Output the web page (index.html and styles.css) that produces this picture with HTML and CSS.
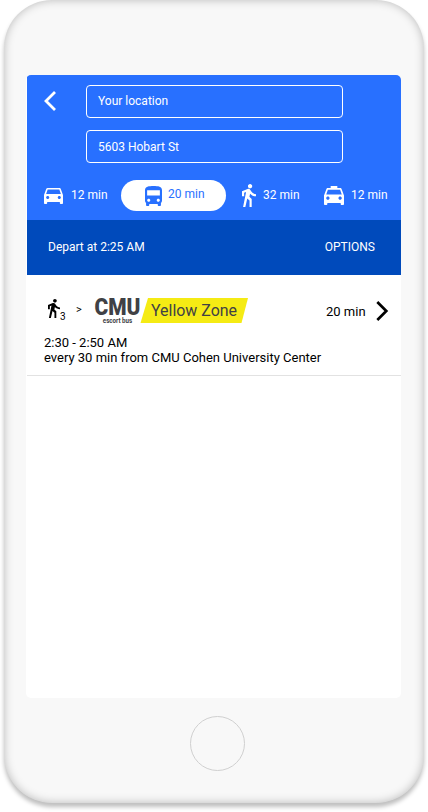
FILE: index.html
```html
<!DOCTYPE html>
<html lang="en">
<head>
<meta charset="utf-8">
<title>Directions</title>
<link rel="stylesheet" href="styles.css">
</head>
<body>
<div class="phone">
  <main class="screen">
    <header class="search">
      <svg class="back" viewBox="0 0 12 20" fill="none" stroke="#fff" stroke-width="2.8"><path d="M11 1 2 10l9 9"/></svg>
      <div class="fields">
        <div class="field">Your location</div>
        <div class="field address">5603 Hobart St</div>
      </div>
    </header>
    <nav class="modes">
      <div class="mode car">
        <svg width="19" height="16" viewBox="3 5 18 16" preserveAspectRatio="none"><path d="M18.92 6.01C18.72 5.42 18.16 5 17.5 5h-11c-.66 0-1.21.42-1.42 1.01L3 12v8c0 .55.45 1 1 1h1c.55 0 1-.45 1-1v-1h12v1c0 .55.45 1 1 1h1c.55 0 1-.45 1-1v-8l-2.08-5.99zM6.5 16c-.83 0-1.5-.67-1.5-1.5S5.67 13 6.5 13s1.5.67 1.5 1.5S7.33 16 6.5 16zm11 0c-.83 0-1.5-.67-1.5-1.5s.67-1.5 1.5-1.5 1.5.67 1.5 1.5-.67 1.5-1.5 1.5zM5 11l1.5-4.5h11L19 11H5z"/></svg>
        <span>12 min</span>
      </div>
      <div class="mode bus">
        <svg width="17" height="20" viewBox="4 2 16 19" preserveAspectRatio="none"><path d="M4 16c0 .88.39 1.67 1 2.22V20c0 .55.45 1 1 1h1c.55 0 1-.45 1-1v-1h8v1c0 .55.45 1 1 1h1c.55 0 1-.45 1-1v-1.78c.61-.55 1-1.34 1-2.22V6c0-3.5-3.58-4-8-4s-8 .5-8 4v10zm3.5 1c-.83 0-1.5-.67-1.5-1.5S6.67 14 7.5 14s1.5.67 1.5 1.5S8.33 17 7.5 17zm9 0c-.83 0-1.5-.67-1.5-1.5s.67-1.5 1.5-1.5 1.5.67 1.5 1.5-.67 1.5-1.5 1.5zm1.5-6H6V6h12v5z"/></svg>
        <span>20 min</span>
      </div>
      <div class="mode walk">
        <svg width="14" height="23" viewBox="6 1.5 13 21.5" preserveAspectRatio="none"><path d="M13.5 5.5c1.1 0 2-.9 2-2s-.9-2-2-2-2 .9-2 2 .9 2 2 2zM9.8 8.9 7 23h2.1l1.8-8 2.1 2v6h2v-7.5l-2.1-2 .6-3C14.8 12 16.8 13 19 13v-2c-1.9 0-3.5-1-4.3-2.4l-1-1.6c-.4-.6-1-1-1.7-1-.3 0-.5.1-.8.1L6 8.3V13h2V9.6l1.8-.7"/></svg>
        <span>32 min</span>
      </div>
      <div class="mode taxi">
        <svg width="20" height="19" viewBox="3 3 18 18" preserveAspectRatio="none"><path d="M18.92 6.01C18.72 5.42 18.16 5 17.5 5H15V3H9v2H6.5c-.66 0-1.21.42-1.42 1.01L3 12v8c0 .55.45 1 1 1h1c.55 0 1-.45 1-1v-1h12v1c0 .55.45 1 1 1h1c.55 0 1-.45 1-1v-8l-2.08-5.99zM6.5 16c-.83 0-1.5-.67-1.5-1.5S5.67 13 6.5 13s1.5.67 1.5 1.5S7.33 16 6.5 16zm11 0c-.83 0-1.5-.67-1.5-1.5s.67-1.5 1.5-1.5 1.5.67 1.5 1.5-.67 1.5-1.5 1.5zM5 11l1.5-4.5h11L19 11H5z"/></svg>
        <span>12 min</span>
      </div>
    </nav>
    <div class="depart"><span>Depart at 2:25 AM</span><span>OPTIONS</span></div>
    <section class="route">
      <div class="route-line">
        <svg class="step" width="12" height="19" viewBox="6 1.5 13 21.5" preserveAspectRatio="none"><path d="M13.5 5.5c1.1 0 2-.9 2-2s-.9-2-2-2-2 .9-2 2 .9 2 2 2zM9.8 8.9 7 23h2.1l1.8-8 2.1 2v6h2v-7.5l-2.1-2 .6-3C14.8 12 16.8 13 19 13v-2c-1.9 0-3.5-1-4.3-2.4l-1-1.6c-.4-.6-1-1-1.7-1-.3 0-.5.1-.8.1L6 8.3V13h2V9.6l1.8-.7"/></svg>
        <span class="minutes">3</span>
        <span class="then">&gt;</span>
        <svg class="logo" width="154" height="28" viewBox="0 0 154 28">
          <text class="cmu" x="0.5" y="17.8" textLength="46" lengthAdjust="spacingAndGlyphs">CMU</text>
          <text class="escort" x="8.8" y="25.6" textLength="29.4" lengthAdjust="spacingAndGlyphs">escort bus</text>
          <path d="M54 1h100l-6.5 25h-101z" fill="#f5eb14"/>
          <text class="zone" x="57" y="18.6" textLength="86" lengthAdjust="spacingAndGlyphs">Yellow Zone</text>
        </svg>
        <span class="duration">20 min</span>
        <svg class="next" width="13" height="20" viewBox="0 0 13 20" fill="none" stroke="#000" stroke-width="2.7"><path d="m1.3 1 9 9-9 9"/></svg>
      </div>
      <p>2:30 - 2:50 AM<br>every 30 min from CMU Cohen University Center</p>
    </section>
  </main>
  <div class="home"></div>
</div>
</body>
</html>
```

FILE: styles.css
```css
* { box-sizing: border-box; }
body { margin: 0; height: 812px; background: #fff; font-family: Roboto, sans-serif; font-size: 12px; overflow: hidden; }
svg { display: block; flex: none; fill: currentColor; overflow: visible; }

.phone {
  width: 420px;
  height: 803px;
  margin: 0 4px;
  padding-top: 75px;
  border-radius: 48px;
  background: #f8f8f8;
  box-shadow: 0 4px 4px rgba(0, 0, 0, .25), inset 0 0 10px rgba(0, 0, 0, .25);
}
.screen {
  width: 375px;
  height: 623px;
  margin-left: 22px;
  padding-left: 1px;
  border-radius: 5px;
  background: #fff;
  overflow: hidden;
}

.search { display: flex; height: 105px; padding: 10px 0 0 17px; background: #2870ff; }
.back { width: 12px; height: 20px; margin: 6px 30px 0 0; fill: none; }
.fields { display: flex; flex-direction: column; gap: 12px; }
.field {
  width: 257px;
  height: 33px;
  padding-left: 11px;
  border: 1px solid #fff;
  border-radius: 4px;
  color: #fff;
  line-height: 31px;
}
.address { line-height: 33px; }

.modes { display: flex; height: 40px; background: #2870ff; color: #fff; }
.mode { display: flex; align-items: center; height: 31px; white-space: nowrap; }
.mode span { padding-bottom: 1px; }
.car { width: 77px; margin-left: 17px; gap: 8px; }
.bus { width: 105px; padding-left: 24px; gap: 6px; border-radius: 16px; background: #fff; color: #2870ff; }
.mode.bus span { padding-bottom: 3px; }
.walk { margin-left: 16px; gap: 7px; }
.walk, .taxi { width: 67px; }
.taxi { margin-left: 15px; gap: 7px; }

.depart {
  display: flex;
  justify-content: space-between;
  height: 55px;
  padding: 0 26px 0 21px;
  background: #004abb;
  color: #fff;
  line-height: 54px;
}

.route { height: 101px; padding: 22px 0 0 17px; border-bottom: 1px solid #e2e2e2; color: #000; font-size: 13px; }
.route-line { display: flex; height: 28px; }
.step { margin: 2px 0 0 4px; }
.minutes { width: 16px; font-size: 10px; line-height: 12px; padding-top: 14px; }
.then { width: 18px; font-size: 11px; line-height: 12px; padding-top: 7px; }
.cmu { font-size: 23.5px; font-weight: 900; fill: #404145; }
.escort { font-size: 6.8px; font-weight: 700; fill: #404145; }
.zone { font-size: 16px; fill: #404145; }
.duration { width: 50px; margin-left: 78px; line-height: 30px; }
.next { margin-top: 4px; fill: none; }
.route p { margin: 10px 0 0; line-height: 15px; }

.home { width: 55px; height: 55px; margin: 18px 0 0 186px; border: 1px solid #d0d0d0; border-radius: 50%; }
```
